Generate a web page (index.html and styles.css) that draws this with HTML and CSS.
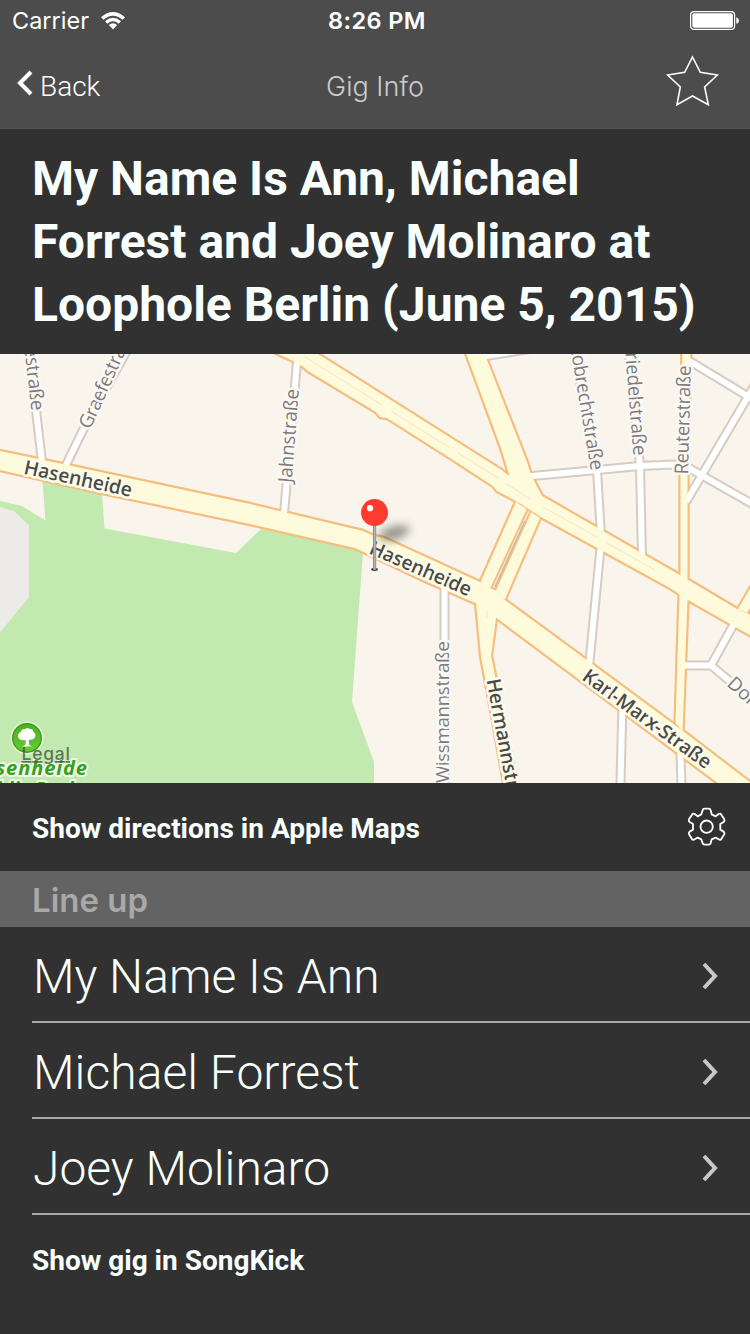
FILE: index.html
```html
<!DOCTYPE html>
<html lang="en">
<head>
<meta charset="utf-8">
<title>Gig Info</title>
<link rel="stylesheet" href="styles.css">
</head>
<body>
<div class="screen">
  <header class="top">
    <div class="status">
      <div class="carrier"><span>Carrier</span>
        <svg class="wifi" viewBox="0 0 26 19"><path d="M1 6.200Q13-4.200 25 6.200L22.500 8.700Q13 .6 3.500 8.700Z"/><path d="M5 10.200Q13 3.500 21 10.200L18.600 12.700Q13 8 7.400 12.700Z"/><path d="M8.800 14Q13 10.600 17.200 14L13 18.400Z"/></svg>
      </div>
      <div class="time">8:26 PM</div>
      <svg class="battery" viewBox="0 0 50 20"><rect x=".6" y=".6" width="44" height="17.800" rx="3.500" fill="none" stroke="#fff" stroke-width="1.200"/><rect x="2.300" y="2.300" width="40.600" height="14.400" rx="2" fill="#fff"/><path d="M46.300 6.200q2.700.7 2.700 3.300t-2.700 3.300z" fill="#fff"/></svg>
    </div>
    <nav class="nav">
      <a class="back"><svg class="back-icon" viewBox="0 0 18 26"><path d="M16 2 5 13 16 24"/></svg><span>Back</span></a>
      <div class="nav-title">Gig Info</div>
      <svg class="star" viewBox="870 160 166 166"><path d="M952.500 172 976 218 1027 226 989 262 1000 315 952.500 289 906 315 916 262 878 226 929 218Z"/></svg>
    </nav>
  </header>

  <h1 class="title"><span>My Name Is Ann, Michael</span><br><span>Forrest and Joey Molinaro at</span><br><span>Loophole Berlin (June 5, 2015)</span></h1>

  <svg class="map" viewBox="0 354 750 429">
    <defs>
      <g id="streets">
        <path d="M29 345 36 410 42 462M130 345 83 430 65 467M298 350 284 514"/>
        <path d="M480 357 530 349"/>
        <path d="M527 476.500 597 470 640 466 673 464.500 688 467.500 755 505.500"/>
        <path d="M573 345 597 470 600.500 527 600.500 548 589 667M628 345 640 466 642 557"/>
        <path d="M688 360 748 396.500 686 502M748 396.500 760 403M760 376 748 396.500"/>
        <path d="M444.500 582V800M622.500 705 620 800M680 740 682 800"/>
        <path d="M682 665.500H711L735 622M711 665.500 760 706"/>
      </g>
      <g id="roads">
        <path d="M-5 450 65 464.500 250 504 363 531 374 536 384 538 480 582 505 600 475 603 425 581 370 555 355 548 250 524 100 492.500-5 469Z"/>
        <path d="M480 582 505 600 588 661 672 723 683 731 760 790V810H754L500 620.500 475 602Z"/>
        <path d="M260 345 278 354 293 361 302 366 308 371 376 412 380 417 387 418 450 458 493 486 497 491 516 501 541 517 670 588 688 600 760 641V619L737 609 690 581 678 574 542 496 508 475 500 469 318 354 304 345Z"/>
        <path d="M463 345 501 448 509 474 516 502 542 496 531 475 527 462 499 391 487 360 481 345Z"/>
        <path d="M516 502 481 581 485 592 505 599 540 518Z"/>
        <path d="M476 602 481 656 491 710 507 800H520L498 690 491 656 496 618 500 600Z"/>
        <path d="M682.500 345 680.500 475V573L679.500 595 675.500 723 682.500 731 687.500 600V475L690.500 345Z"/>
        <path d="M738 609 760 572V591L747 613Z"/>
      </g>
      <filter id="soft" x="-60%" y="-90%" width="220%" height="280%"><feGaussianBlur stdDeviation="5"/></filter>
      <linearGradient id="leaf" x2="0" y2="1"><stop stop-color="#4fae23"/><stop offset="1" stop-color="#66ca38"/></linearGradient>
    </defs>
    <rect class="land" y="354" width="750" height="429"/>
    <path class="park" d="M0 501 22 506 45.500 520.500 42 475 101 480 104.500 528.500 236 553 262 528 363 552 352 702 374 762V783H0Z"/>
    <path class="paved" d="M0 507 14 511 29 525.500V597L0 632.500Z"/>

    <use href="#streets" class="street-edge"/>
    <use href="#roads" class="road-edge"/>
    <use href="#streets" class="street"/>
    <use href="#roads" class="road"/>

    <path class="median" d="M305 357 382 405M391 411 450 448M458 453 498 478M507 484 530 499M543 507 597 537M607 543 655 570"/>
    <path class="island" d="M527.500 509.500 530.500 511.500 495.500 589.500 491.500 587.500Z"/>
    <path class="island-line" d="M525 521 495 587"/>
    <path class="median" d="M487 611V618"/>

    <g class="minor">
      <text transform="translate(31.500 411) rotate(83.500)" text-anchor="end" textLength="103">Fichtestraße</text>
      <text transform="translate(90 430) rotate(-65.500)" textLength="109">Graefestraße</text>
      <text transform="translate(291.500 483) rotate(-85.500)" textLength="94">Jahnstraße</text>
      <text transform="translate(591 471) rotate(80.500)" text-anchor="end" textLength="130">Hobrechtstraße</text>
      <text transform="translate(633.500 456) rotate(85.500)" text-anchor="end" textLength="113">Friedelstraße</text>
      <text transform="translate(688 474.500) rotate(-88.500)" textLength="109">Reuterstraße</text>
      <text transform="translate(448.500 783) rotate(-90)" textLength="142">Wissmannstraße</text>
      <text transform="translate(726 685) rotate(42)">Donaustraße</text>
    </g>
    <g class="major">
      <text transform="translate(23 473.500) rotate(12.300)" textLength="110">Hasenheide</text>
      <text transform="translate(368 553) rotate(23.500)" textLength="109">Hasenheide</text>
      <text transform="translate(581 679) rotate(36)" textLength="154">Karl-Marx-Straße</text>
      <text transform="translate(486.500 680) rotate(79.500)" textLength="146">Hermannstraße</text>
    </g>

    <circle cx="27" cy="738" r="16.500" fill="#e5f6da"/>
    <circle cx="27" cy="738" r="14.300" fill="url(#leaf)" stroke="#39a012" stroke-width="1.400"/>
    <path fill="#fff" d="M21 746.500q4-.5 4.500-2.200l.3-4.300q-7 1-7.800-3.500-.3-3.500 2.700-4.500.8-3.500 4.600-3 2-2.200 4.400 0 3.700-.2 3.800 3 2.600 1.500 1.600 5-1.400 3.300-6.300 2.700l.2 4.500q.5 1.800 4.200 2.300z"/>
    <g class="park-label">
      <text x="87" y="775" text-anchor="end" textLength="119">Hasenheide</text>
      <text x="79" y="796" text-anchor="end" textLength="108">Public Park</text>
    </g>
    <text class="legal" x="21.500" y="760" textLength="48.500">Legal</text>

    <ellipse cx="394" cy="533" rx="16" ry="6.500" transform="rotate(-17 394 533)" fill="#000" opacity=".42" filter="url(#soft)"/>
    <ellipse cx="374.500" cy="569.300" rx="3.500" ry="1.600" fill="#444"/>
    <rect x="373" y="524" width="3.200" height="45.500" fill="#8d8d90"/>
    <rect x="374" y="524" width="1.400" height="45.500" fill="#b5b5b8"/>
    <circle cx="374.500" cy="512.500" r="13.500" fill="#ff3b30"/>
    <circle cx="370" cy="508.200" r="3.100" fill="#fff"/>
  </svg>

  <div class="action">
    <span>Show directions in Apple Maps</span>
    <svg class="gear" viewBox="255 75 130 130"><path d="M304 103 308 91Q309 86 314 86H326Q331 86 332 91L335 103 347 109 356 102Q361 99 364 104L373 118Q375 122 371 126L361 132V149L371 155Q375 159 373 163L364 177Q361 182 356 178L347 173 335 178 332 190Q331 194 326 194H314Q309 194 308 190L304 178 293 173 284 178Q279 182 276 177L267 163Q265 159 269 155L279 149V132L269 126Q265 122 267 118L276 104Q279 99 284 102L293 109Z"/><circle cx="320" cy="140" r="18.500"/></svg>
  </div>
  <h2 class="section">Line up</h2>
  <ul class="lineup">
    <li><span>My Name Is Ann</span><svg class="chevron" viewBox="0 0 18 28"><path d="M3 2 14 14 3 26"/></svg></li>
    <li><span class="wide">Michael Forrest</span><svg class="chevron" viewBox="0 0 18 28"><path d="M3 2 14 14 3 26"/></svg></li>
    <li><span>Joey Molinaro</span><svg class="chevron" viewBox="0 0 18 28"><path d="M3 2 14 14 3 26"/></svg></li>
  </ul>
  <div class="action songkick"><span>Show gig in SongKick</span></div>
</div>
</body>
</html>
```
FILE: styles.css
```css
* { box-sizing: border-box; }

body {
  margin: 0;
  background: #313131;
  color: #f8fffd;
  font-family: Roboto, sans-serif;
}

.screen {
  width: 750px;
  height: 1334px;
  overflow: hidden;
  display: flex;
  flex-direction: column;
}

.top {
  flex: none;
  height: 129px;
  background: #4c4c4c;
  border-bottom: 1px solid #525252;
  color: #fff;
}

.status {
  height: 40px;
  padding: 1px 10px 0 12px;
  display: grid;
  grid-template-columns: 1fr auto 1fr;
  align-items: center;
  font-family: Inter, sans-serif;
  font-size: 23.5px;
}

.carrier { display: flex; align-items: center; gap: 11px; }
.wifi { width: 26px; height: 19px; fill: #fff; }
.time { font-weight: 600; letter-spacing: .4px; margin-left: 2px; }
.battery { width: 50px; height: 20px; justify-self: end; }

.nav {
  height: 88px;
  padding: 0 30px 0 15px;
  display: grid;
  grid-template-columns: 1fr auto 1fr;
  align-items: center;
}

.back { display: flex; align-items: center; gap: 7px; font-size: 28px; font-weight: 300; padding-top: 5px; }
.back-icon { width: 18px; height: 26px; margin-top: -7px; fill: none; stroke: #fff; stroke-width: 4; }
.nav-title { margin-left: 15px; font-family: Inter, sans-serif; font-size: 27px; font-weight: 300; color: #ccc; padding-top: 4px; }
.star { width: 55.3px; height: 55.3px; justify-self: end; margin-top: -7px; fill: none; stroke: #fff; stroke-width: 4.8; }

.title {
  flex: none;
  height: 225px;
  margin: 0;
  padding: 18px 32px 0;
  font-size: 48px;
  line-height: 63px;
  font-weight: 700;
  white-space: nowrap;
}

.map { flex: none; display: block; width: 750px; height: 429px; font-family: "Open Sans", sans-serif; }
.land { fill: #f9f5ed; }
.park { fill: #c2e9af; }
.paved { fill: #ecebe7; }
.street-edge { fill: none; stroke: #d6ccc1; stroke-width: 10; }
.street { fill: none; stroke: #fff; stroke-width: 6; }
.road-edge { fill: #f6bd7d; stroke: #f6bd7d; stroke-width: 4.4; stroke-linejoin: round; }
.road { fill: #fdfbdc; }
.median { fill: none; stroke: #fae3bd; stroke-width: 1; }
.island { fill: #f9e4c4; stroke: #f6bd7d; stroke-width: 1.8; }
.island-line { fill: none; stroke: #c5bbb3; stroke-width: 1.5; }

.minor, .major, .park-label { paint-order: stroke; stroke-linejoin: round; }
.minor { font-size: 19px; font-weight: 500; fill: #7b7b7d; stroke: #fbf8f3; stroke-width: 5; }
.major { font-size: 19.5px; font-weight: 600; fill: #4a4a4a; stroke: #fdfce9; stroke-width: 5; }
.park-label { font-size: 20px; font-weight: 700; font-style: italic; fill: #38a01a; stroke: #f0faea; stroke-width: 4; }
.legal { font: 500 17.5px Inter, sans-serif; fill: #3f4a3d; fill-opacity: .75; text-decoration: underline; }

.action {
  flex: none;
  height: 88px;
  padding: 2px 22px 0 32px;
  display: flex;
  align-items: center;
  justify-content: space-between;
  font-size: 28px;
  font-weight: 700;
}

.gear { width: 43.3px; height: 43.3px; margin-top: -3px; fill: none; stroke: #fff; stroke-width: 5.5; stroke-linejoin: round; }

.section {
  flex: none;
  height: 56px;
  margin: 0;
  padding: 1px 32px 0;
  background: #636363;
  color: #a9a9a9;
  font: 600 33px/56px Inter, sans-serif;
}

.lineup { flex: none; list-style: none; margin: 0; padding: 0 0 0 32px; }

.lineup li {
  height: 96px;
  padding: 4px 31px 0 1px;
  border-bottom: 2px solid #a9a9a9;
  display: flex;
  align-items: center;
  justify-content: space-between;
  font-size: 48px;
  font-weight: 300;
}

.wide { letter-spacing: .05px; }
.chevron { width: 18px; height: 28px; margin-top: -1px; fill: none; stroke: #c7c7cc; stroke-width: 4; }
.songkick { padding-top: 2px; }
```
